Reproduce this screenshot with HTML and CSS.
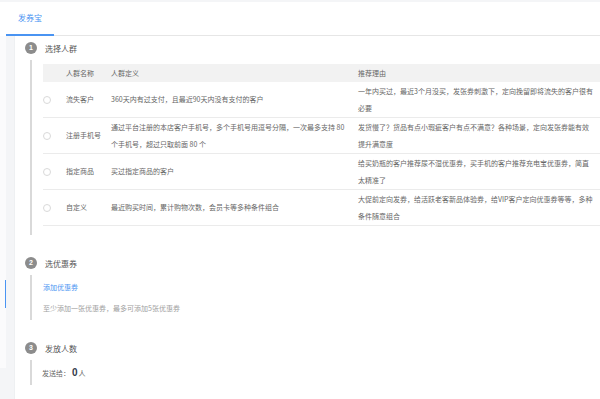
FILE: index.html
```html
<!DOCTYPE html>
<html lang="zh-CN">
<head>
<meta charset="utf-8">
<link rel="stylesheet" href="styles.css">
</head>
<body>
<header class="header">
  <nav class="tabs"><div class="tab">发券宝</div></nav>
</header>
<div class="main">
  <aside class="side"><div class="side-inner"><div class="side-active"></div></div></aside>
  <section class="content">
    <div class="step">
      <div class="step-head"><span class="num">1</span><span class="title">选择人群</span></div>
      <div class="step-body body-1">
        <div class="table">
          <div class="row head">
            <div class="cell"></div>
            <div class="cell">人群名称</div>
            <div class="cell">人群定义</div>
            <div class="cell">推荐理由</div>
          </div>
          <div class="row">
            <div class="cell"><span class="radio"></span></div>
            <div class="cell">流失客户</div>
            <div class="cell">360天内有过支付，且最近90天内没有支付的客户</div>
            <div class="cell">一年内买过，最近3个月没买，发张券刺激下，定向挽留即将流失的客户很有<br>必要</div>
          </div>
          <div class="row">
            <div class="cell"><span class="radio"></span></div>
            <div class="cell">注册手机号</div>
            <div class="cell">通过平台注册的本店客户手机号，多个手机号用逗号分隔，一次最多支持 80<br>个手机号，超过只取前面 80 个</div>
            <div class="cell">发货慢了？货品有点小瑕疵客户有点不满意？各种场景，定向发张券能有效<br>提升满意度</div>
          </div>
          <div class="row">
            <div class="cell"><span class="radio"></span></div>
            <div class="cell">指定商品</div>
            <div class="cell">买过指定商品的客户</div>
            <div class="cell">给买奶瓶的客户推荐尿不湿优惠券，买手机的客户推荐充电宝优惠券，简直<br>太精准了</div>
          </div>
          <div class="row">
            <div class="cell"><span class="radio"></span></div>
            <div class="cell">自定义</div>
            <div class="cell">最近购买时间，累计购物次数，会员卡等多种条件组合</div>
            <div class="cell">大促前定向发券，给活跃老客新品体验券，给VIP客户定向优惠券等等，多种<br>条件随意组合</div>
          </div>
        </div>
      </div>
    </div>
    <div class="step">
      <div class="step-head"><span class="num">2</span><span class="title">选优惠券</span></div>
      <div class="step-body body-2">
        <a class="link">添加优惠券</a>
        <p class="tip">至少添加一张优惠券，最多可添加5张优惠券</p>
      </div>
    </div>
    <div class="step">
      <div class="step-head"><span class="num">3</span><span class="title">发放人数</span></div>
      <div class="step-body body-3">
        <span class="send">发送给：</span><b class="count">0</b><span class="send">人</span>
      </div>
    </div>
  </section>
</div>
</body>
</html>
```
FILE: styles.css
```css
* { box-sizing: border-box; }
html, body { margin: 0; padding: 0; }
body {
  background: #f4f5f7;
  padding-top: 2px;
  font-family: "Noto Sans CJK SC", "Noto Sans", sans-serif;
  color: #666;
  height: 399px;
  overflow: hidden;
}
.header { background: #fff; }
.tabs {
  margin-left: 6px;
  height: 34px;
  border-bottom: 1px solid #e6e6e6;
  display: flex;
}
.tab {
  padding: 0 12px;
  height: 34px;
  line-height: 31px;
  font-size: 8px;
  color: #4a94f2;
  border-bottom: 2px solid #4a94f2;
  margin-bottom: -1px;
}
.main { display: flex; height: 363px; }
.side {
  width: 15px;
  flex: none;
  background: #f4f5f7;
  border-right: 1px solid #eef0f2;
}
.side-inner {
  width: 6px;
  height: 332px;
  background: #fbfbfc;
  padding-top: 244px;
}
.side-active {
  width: 1px;
  height: 28px;
  margin-left: 5px;
  background: #4a94f2;
}
.content {
  flex: 1;
  background: #fff;
  padding-top: 6px;
  padding-left: 10px;
}
.step + .step { margin-top: 22px; }
.step-head {
  display: flex;
  align-items: center;
  height: 12px;
}
.num {
  width: 12px;
  height: 12px;
  border-radius: 50%;
  background: #8c8c8c;
  color: #fff;
  font-size: 7px;
  font-weight: bold;
  line-height: 12px;
  text-align: center;
  font-family: "Liberation Sans", sans-serif;
}
.title {
  margin-left: 8px;
  font-size: 8px;
  color: #555;
}
.step-body {
  margin-top: 6px;
  margin-left: 5px;
  border-left: 2px solid #d9d9d9;
  padding-left: 11px;
}
.body-1 { padding-top: 4px; padding-bottom: 9px; }
.table { font-size: 7px; color: #666; }
.row {
  display: grid;
  grid-template-columns: 23px 45px 247px 1fr;
  align-items: center;
  height: 36px;
  border-bottom: 1px solid #ebebeb;
  line-height: 17px;
  white-space: nowrap;
}
.row.head {
  height: 18px;
  background: #f2f2f2;
  border-bottom: none;
}
.radio {
  display: block;
  width: 8px;
  height: 8px;
  border: 1px solid #d9d9d9;
  border-radius: 50%;
  background: #fff;
}
.body-2 { padding-top: 5px; padding-bottom: 5px; }
.link {
  display: block;
  font-size: 7px;
  line-height: 14px;
  color: #4a94f2;
}
.tip {
  margin: 7px 0 0;
  font-size: 7px;
  line-height: 14px;
  color: #a0a0a0;
}
.body-3 {
  height: 25px;
  display: flex;
  align-items: center;
  padding-left: 10px;
}
.send { font-size: 7px; color: #666; }
.count {
  font-size: 10px;
  color: #333a4a;
  margin: 0 1px 0 2px;
  font-family: "Liberation Sans", sans-serif;
}
```
